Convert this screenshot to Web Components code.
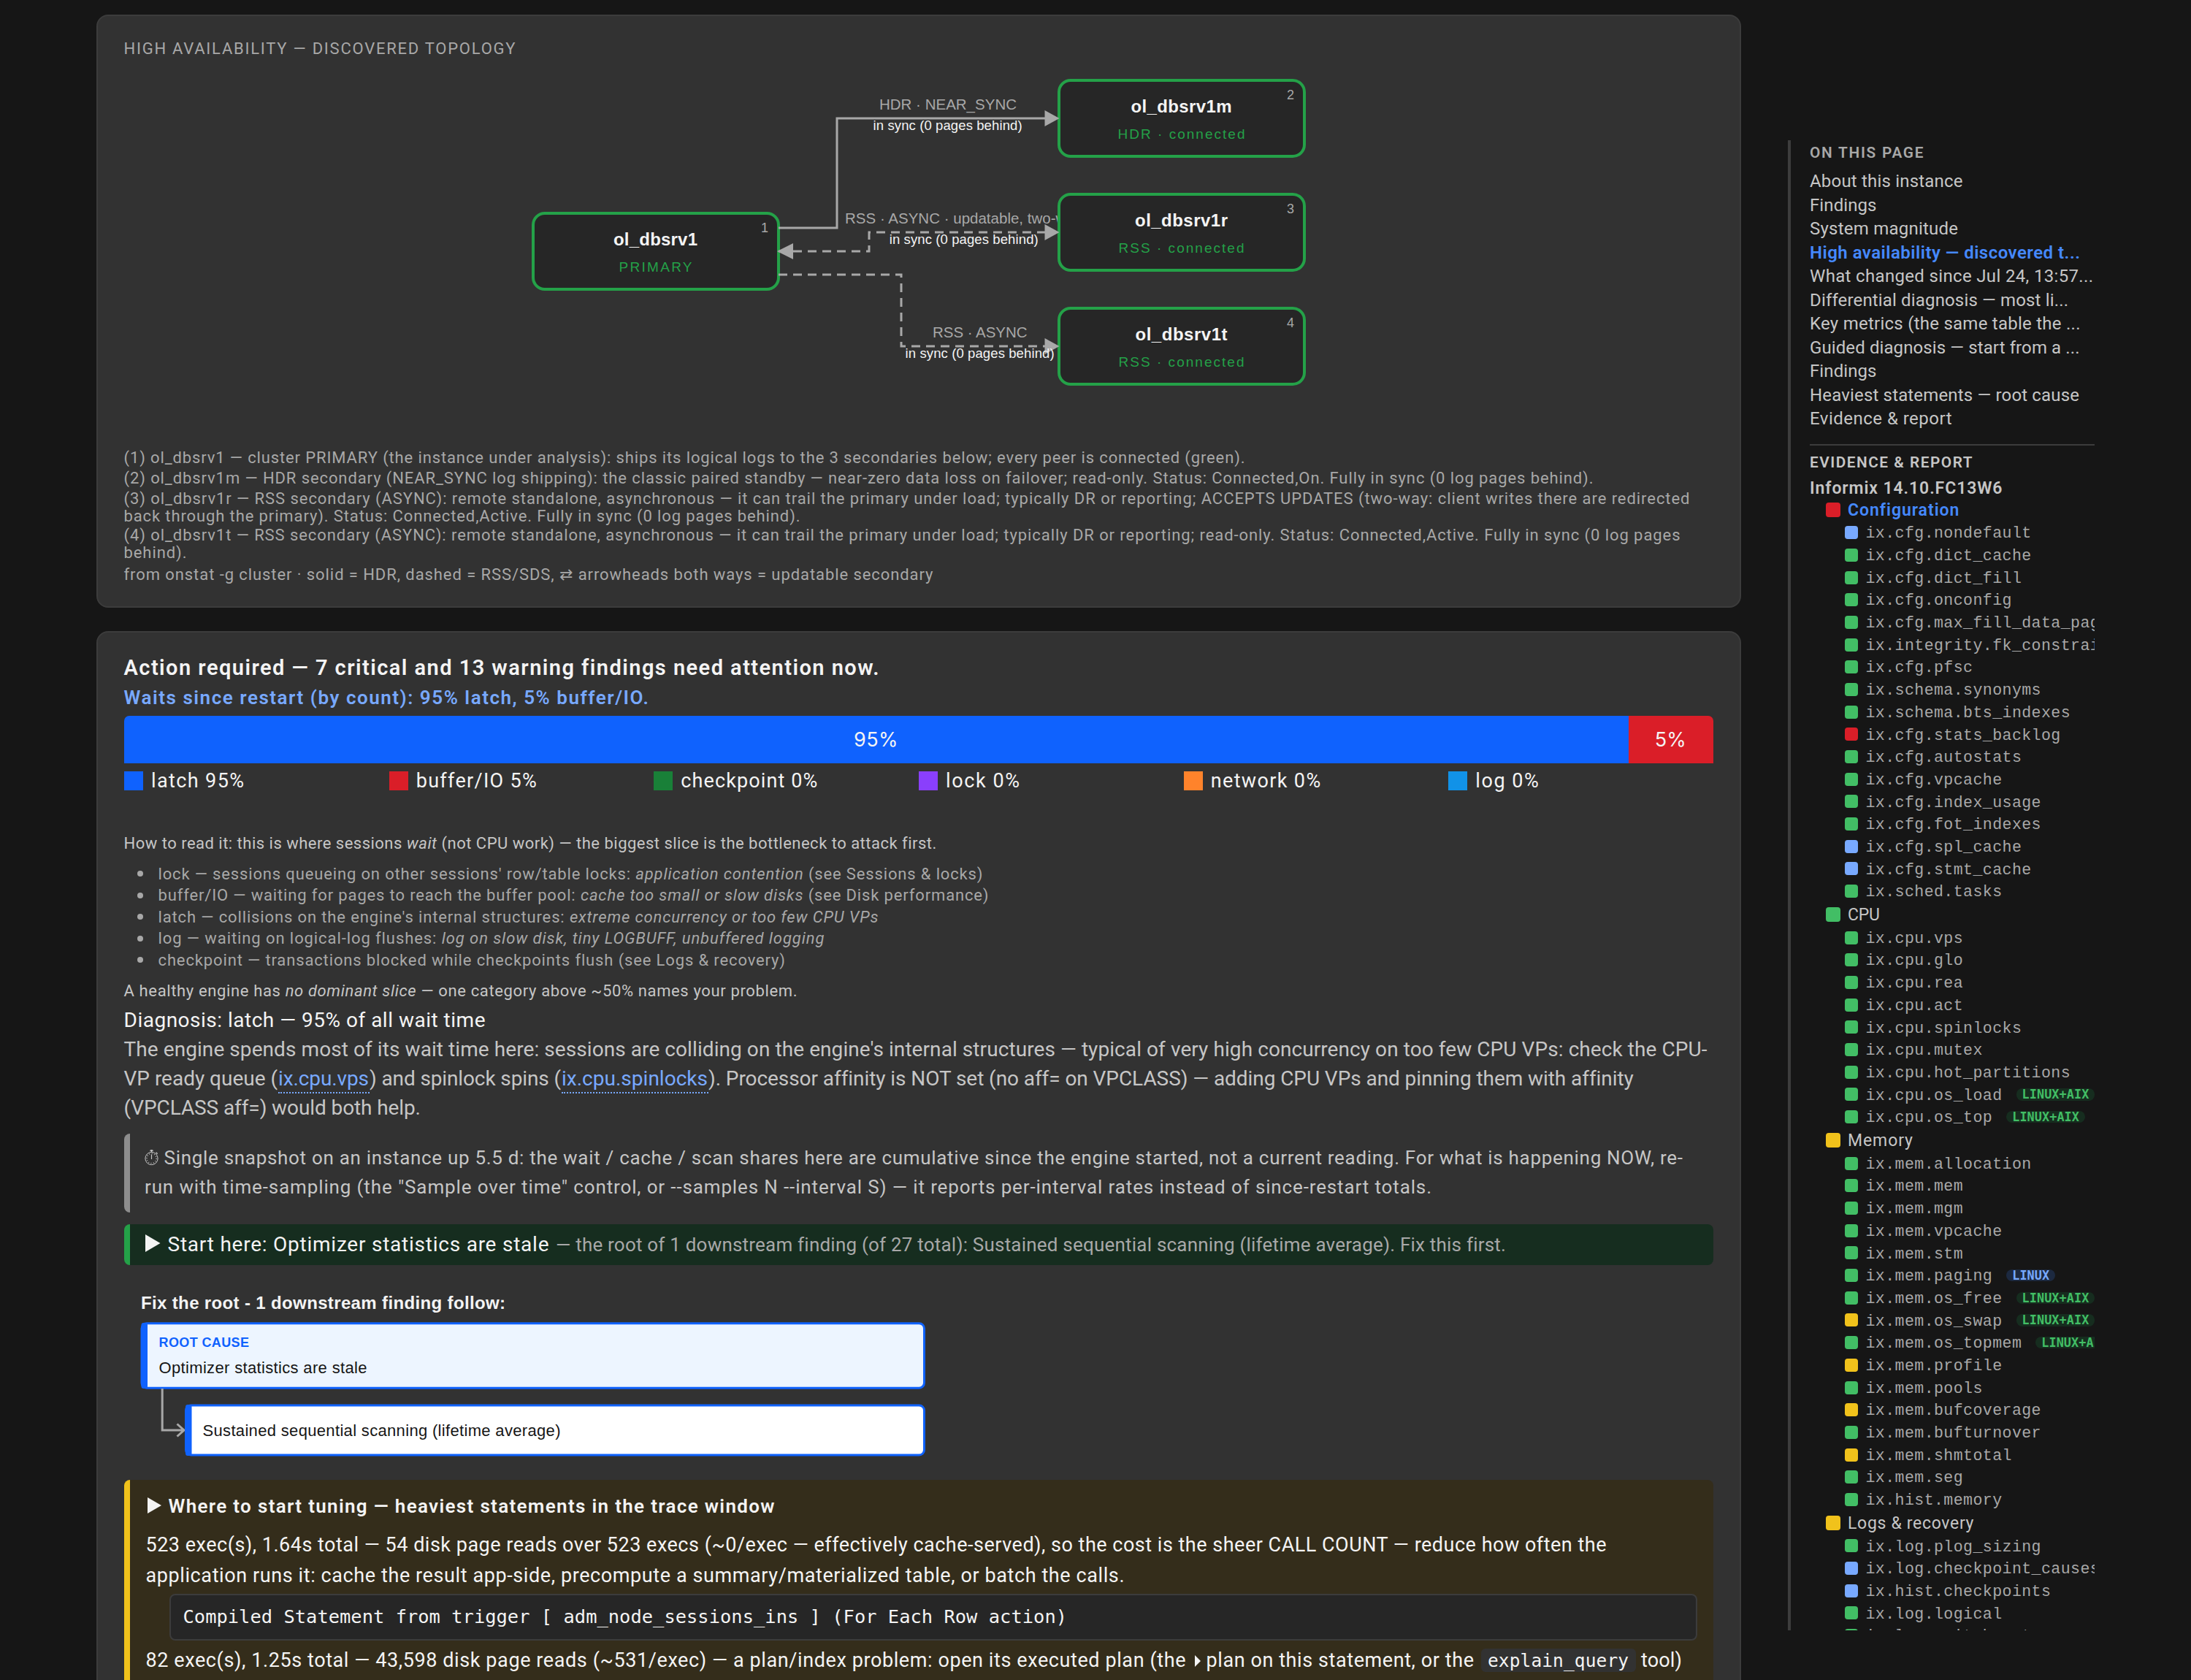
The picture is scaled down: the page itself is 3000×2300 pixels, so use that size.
<!DOCTYPE html>
<html lang="en">
<head>
<meta charset="utf-8">
<title>Informix health report</title>
<style>
html,body{margin:0;padding:0;background:#161616;}
body{width:3000px;height:2300px;overflow:hidden;color:#c6c6c6;font-family:Roboto,"Noto Sans","DejaVu Sans",sans-serif;}
em{font-style:italic;}
</style>
</head>
<body>
<report-page>
  <topology-card slot="main"></topology-card>
  <findings-card slot="main"></findings-card>
  <page-nav slot="nav"></page-nav>
</report-page>
<script>
/* <t-line w size lh>: one line of text whose tracking is tuned to a given width. */
class TLine extends HTMLElement {
  connectedCallback() {
    if (this.shadowRoot) return;
    const root = this.attachShadow({mode: 'open'});
    const size = this.getAttribute('size'), lh = this.getAttribute('lh');
    root.innerHTML = `<style>
      :host{display:block;white-space:pre;flex:none;width:max-content;
        ${size ? `font-size:${size}px;` : ''}${lh ? `line-height:${lh}px;height:${lh}px;` : ''}}
      </style><slot></slot>`;
    const w = parseFloat(this.getAttribute('w'));
    if (w) {
      this.style.letterSpacing = '0px';
      const natural = this.getBoundingClientRect().width;
      const ls = (w - 1 - natural) / Math.max(1, [...this.textContent].length - 1);
      this.style.letterSpacing = ls.toFixed(4) + 'px';
      this.style.width = w + 'px';
    }
  }
}

class ReportPage extends HTMLElement {
  constructor() {
    super();
    this.attachShadow({mode: 'open'}).innerHTML = `<style>
      :host{display:flex;width:3000px;height:2300px;overflow:hidden;align-items:flex-start;}
      main{display:flex;flex-direction:column;gap:32px;width:2252px;margin:20px 64px 0 132px;flex:none;}
      aside{flex:none;margin-top:192px;}
    </style><main><slot name="main"></slot></main><aside><slot name="nav"></slot></aside>`;
  }
}

const cardCss = `:host{display:block;box-sizing:border-box;background:#323232;border:2px solid #3c3c3c;border-radius:16px;padding:28px 36px 0 35.5px;}`;

class TopologyCard extends HTMLElement {
  connectedCallback() {
    const node = (x, y, n, name, nw, role, rw) => `
      <rect x="${x}" y="${y}" width="336" height="104" rx="16" fill="#262626" stroke="#24a148" stroke-width="4"/>
      <text x="${x + 167.5 - nw / 2}" y="${y + 44}" class="name" textLength="${nw}">${name}</text>
      <text x="${x + 167.5 - rw / 2}" y="${y + 80}" class="role" textLength="${rw}">${role}</text>
      <text x="${x + 322}" y="${y + 26}" class="num">${n}</text>`;
    const right = y => `<path d="M1430.5 ${y - 11}L1450.5 ${y}L1430.5 ${y + 11}Z" fill="#a8a8a8"/>`;
    const sync = (cx, y) => `<text x="${cx - 102}" y="${y}" class="sync" textLength="204">in sync (0 pages behind)</text>`;
    this.attachShadow({mode: 'open'}).innerHTML = `<style>${cardCss}
      :host{height:812px;}
      svg{display:block;margin:1px 0 0 .5px;}
      svg text{font-family:"Liberation Sans",Arial,sans-serif;}
      .name{font-size:24px;font-weight:700;fill:#f4f4f4;}
      .role{font-size:19px;fill:#24a148;}
      .num{font-size:18px;fill:#a8a8a8;text-anchor:end;}
      .lab{font-size:20.5px;fill:#a8a8a8;}
      .sync{font-size:18.5px;fill:#f4f4f4;}
      .edge{fill:none;stroke:#a8a8a8;stroke-width:3;}
      .dash{stroke-dasharray:12 8;}
      .title,.notes{color:#a8a8a8;}
      .notes{padding-top:.5px;display:flex;flex-direction:column;}
      .p{margin-bottom:4px;}
      .p3{margin-bottom:2px;}
      .p4{margin-bottom:6px;}
    </style>
    <t-line class="title" w="537" size="22" lh="33">HIGH AVAILABILITY — DISCOVERED TOPOLOGY</t-line>
    <svg width="2176" height="530" viewBox="170 84 2176 530">
      <text x="1204" y="150" class="lab" textLength="188">HDR · NEAR_SYNC</text>
      <text x="1157" y="306" class="lab" textLength="325">RSS · ASYNC · updatable, two-way</text>
      <text x="1277" y="462" class="lab" textLength="129.5">RSS · ASYNC</text>
      ${node(730, 292, 1, 'ol_dbsrv1', 115, 'PRIMARY', 100)}
      ${node(1450, 110, 2, 'ol_dbsrv1m', 138, 'HDR · connected', 174)}
      ${node(1450, 266, 3, 'ol_dbsrv1r', 127, 'RSS · connected', 172)}
      ${node(1450, 422, 4, 'ol_dbsrv1t', 126, 'RSS · connected', 172)}
      <path class="edge" d="M1066 312H1146V162H1440"/>
      <path class="edge dash" d="M1066 344H1190V318H1440"/>
      <path class="edge dash" d="M1066 376H1234V474H1440"/>
      <path d="M1086 333L1064 344L1086 355Z" fill="#a8a8a8"/>
      ${right(162)}${right(318)}${right(474)}
      ${sync(1297.6, 178)}${sync(1319.7, 334)}${sync(1341.6, 490)}
    </svg>
    <div class="notes">
      <div class="p"><t-line w="1536" size="22" lh="24">(1) ol_dbsrv1 — cluster PRIMARY (the instance under analysis): ships its logical logs to the 3 secondaries below; every peer is connected (green).</t-line></div>
      <div class="p"><t-line w="2013" size="22" lh="24">(2) ol_dbsrv1m — HDR secondary (NEAR_SYNC log shipping): the classic paired standby — near-zero data loss on failover; read-only. Status: Connected,On. Fully in sync (0 log pages behind).</t-line></div>
      <div class="p3"><t-line w="2145" size="22" lh="24">(3) ol_dbsrv1r — RSS secondary (ASYNC): remote standalone, asynchronous — it can trail the primary under load; typically DR or reporting; ACCEPTS UPDATES (two-way: client writes there are redirected</t-line>
      <t-line w="927" size="22" lh="24">back through the primary). Status: Connected,Active. Fully in sync (0 log pages behind).</t-line></div>
      <div class="p4"><t-line w="2132" size="22" lh="24">(4) ol_dbsrv1t — RSS secondary (ASYNC): remote standalone, asynchronous — it can trail the primary under load; typically DR or reporting; read-only. Status: Connected,Active. Fully in sync (0 log pages</t-line>
      <t-line w="87" size="22" lh="24">behind).</t-line></div>
      <div><t-line w="1109" size="22" lh="24">from onstat -g cluster · solid = HDR, dashed = RSS/SDS, ⇄ arrowheads both ways = updatable secondary</t-line></div>
    </div>`;
  }
}

class LegendItem extends HTMLElement {
  connectedCallback() {
    this.attachShadow({mode: 'open'}).innerHTML = `<style>
      :host{display:flex;flex:1 1 0;gap:11px;height:26px;color:#f4f4f4;}
      i{width:26px;height:26px;background:${this.getAttribute('color')};flex:none;}
    </style><i></i><t-line w="${this.getAttribute('w')}" size="27" lh="26">${this.getAttribute('label')}</t-line>`;
  }
}

class FindingsCard extends HTMLElement {
  connectedCallback() {
    this.attachShadow({mode: 'open'}).innerHTML = `<style>${cardCss}
      :host{height:1500px;overflow:hidden;}
      .b{font-weight:600;}
      .w{color:#f4f4f4;}
      .dim{color:#a8a8a8;}
      .bar{display:flex;height:65px;margin:5px 0 0 .5px;border-radius:7px 7px 0 0;overflow:hidden;color:#f4f4f4;font-family:Inter,Roboto,sans-serif;}
      .bar div{display:flex;align-items:center;justify-content:center;}
      .bar .l{flex:1;background:#0f62fe;}
      .bar .r{width:116.5px;background:#da1e28;}
      .legend{display:flex;margin:11px 0 0 .5px;}
      ul{margin:13px 0 13.5px;padding:0 0 0 18px;list-style:none;color:#a8a8a8;}
      li{display:flex;align-items:center;height:29.5px;gap:21px;}
      li::before{content:"";width:8px;height:8px;border-radius:50%;background:#a8a8a8;flex:none;}
      .row{display:flex;}
      .a{color:#78a9ff;display:block;height:38px;border-bottom:2px dotted #78a9ff;margin-bottom:-2px;}
      .snap{margin-top:15.5px;box-sizing:border-box;height:108px;border-left:8px solid #8d8d8d;border-radius:8px;padding:13px 0 0 20.5px;}
      .clock{flex:none;margin:8px 7.5px 0 0;display:block;}
      .start{display:flex;align-items:center;margin-top:16px;box-sizing:border-box;height:56px;border-left:8px solid #24a148;border-radius:8px;background:#162d1f;padding-left:21px;}
      .tri{flex:none;display:block;}
      svg text{font-family:"Liberation Sans",Arial,sans-serif;}
      .tune{box-sizing:border-box;height:400px;border-left:8px solid #f1c21b;border-radius:8px;background:#342d1b;padding:16px 22px 0 22px;color:#f4f4f4;}
      .code{margin:4px 0 6px 32px;box-sizing:border-box;height:64px;border:2px solid #3c3c3c;border-radius:8px;background:#262626;padding-left:17px;font-family:"DejaVu Sans Mono",monospace;}
      .last{display:flex;align-items:baseline;}
      .chip{background:#323232;border-radius:6px;padding:2.5px 9px 0;height:30px;font-family:"DejaVu Sans Mono",monospace;margin:0 7px 0 9px;}
      .small{display:block;margin:0 8px 0 11px;}
    </style>
    <t-line class="b w" w="1034.5" size="29" lh="40">Action required — 7 critical and 13 warning findings need attention now.</t-line>
    <t-line class="b" style="color:#78a9ff;margin-top:1px" w="719.5" size="26" lh="40">Waits since restart (by count): 95% latch, 5% buffer/IO.</t-line>
    <div class="bar"><div class="l"><t-line w="61.5" size="27" lh="66">95%</t-line></div><div class="r"><t-line w="44" size="27" lh="66">5%</t-line></div></div>
    <div class="legend">
      <legend-item color="#0f62fe" label="latch 95%" w="128"></legend-item>
      <legend-item color="#da1e28" label="buffer/IO 5%" w="166"></legend-item>
      <legend-item color="#198038" label="checkpoint 0%" w="188"></legend-item>
      <legend-item color="#8a3ffc" label="lock 0%" w="102"></legend-item>
      <legend-item color="#ff832b" label="network 0%" w="151.5"></legend-item>
      <legend-item color="#1192e8" label="log 0%" w="87.5"></legend-item>
    </div>
    <t-line style="margin-top:58.5px" w="1113" size="22" lh="28">How to read it: this is where sessions <em>wait</em> (not CPU work) — the biggest slice is the bottleneck to attack first.</t-line>
    <ul>
      <li><t-line w="1130" size="22" lh="29.5">lock — sessions queueing on other sessions' row/table locks: <em>application contention</em> (see Sessions &amp; locks)</t-line></li>
      <li><t-line w="1138" size="22" lh="29.5">buffer/IO — waiting for pages to reach the buffer pool: <em>cache too small or slow disks</em> (see Disk performance)</t-line></li>
      <li><t-line w="987" size="22" lh="29.5">latch — collisions on the engine's internal structures: <em>extreme concurrency or too few CPU VPs</em></t-line></li>
      <li><t-line w="912.5" size="22" lh="29.5">log — waiting on logical-log flushes: <em>log on slow disk, tiny LOGBUFF, unbuffered logging</em></t-line></li>
      <li><t-line w="859" size="22" lh="29.5">checkpoint — transactions blocked while checkpoints flush (see Logs &amp; recovery)</t-line></li>
    </ul>
    <t-line w="923" size="22" lh="28">A healthy engine has <em>no dominant slice</em> — one category above ~50% names your problem.</t-line>
    <t-line class="w" style="margin-top:6px" w="496" size="28" lh="40">Diagnosis: latch — 95% of all wait time</t-line>
    <t-line w="2169" size="28" lh="40">The engine spends most of its wait time here: sessions are colliding on the engine's internal structures — typical of very high concurrency on too few CPU VPs: check the CPU-</t-line>
    <div class="row"><t-line w="211.5" size="28" lh="40">VP ready queue (</t-line><span class="a"><t-line w="125" size="28" lh="40">ix.cpu.vps</t-line></span><t-line w="263" size="28" lh="40">) and spinlock spins (</t-line><span class="a"><t-line w="201" size="28" lh="40">ix.cpu.spinlocks</t-line></span><t-line w="1263" size="28" lh="40">). Processor affinity is NOT set (no aff= on VPCLASS) — adding CPU VPs and pinning them with affinity</t-line></div>
    <t-line w="407.5" size="28" lh="40">(VPCLASS aff=) would both help.</t-line>
    <div class="snap">
      <div class="row"><svg class="clock" width="19" height="23" viewBox="0 0 19 23" fill="none" stroke="#c6c6c6"><circle cx="9.5" cy="13" r="8.6" stroke-width="1"/><circle cx="9.5" cy="13" r="6.6" stroke-width="1.6" stroke-dasharray="0.9 2.556"/><path d="M9.5 14V7.5" stroke-width="1.2"/><path d="M7.5 2.6Q9.5 1 11.5 2.6M9.5 2v2.4M15.6 4.8l2 2" stroke-width="1.4"/></svg><t-line w="2080.5" size="26" lh="40">Single snapshot on an instance up 5.5 d: the wait / cache / scan shares here are cumulative since the engine started, not a current reading. For what is happening NOW, re-</t-line></div>
      <t-line w="1763" size="26" lh="40">run with time-sampling (the "Sample over time" control, or --samples N --interval S) — it reports per-interval rates instead of since-restart totals.</t-line>
    </div>
    <div class="start"><svg class="tri" width="31" height="24" viewBox="0 0 31 24" style="margin-bottom:4px"><path d="M0 0L20.5 12L0 24Z" fill="#f4f4f4"/></svg><t-line class="w" style="margin-right:8.5px" w="523" size="28" lh="56">Start here: Optimizer statistics are stale</t-line><t-line class="dim" w="1300" size="26" lh="58">— the root of 1 downstream finding (of 27 total): Sustained sequential scanning (lifetime average). Fix this first.</t-line></div>
    <svg width="1200" height="294" viewBox="170 1732 1200 294" style="display:block;margin-left:.5px">
      <text x="193" y="1792" font-size="24" font-weight="700" fill="#f4f4f4" textLength="499">Fix the root - 1 downstream finding follow:</text>
      <rect x="194" y="1811.7" width="1071.5" height="88.5" rx="7" fill="#edf5ff" stroke="#0f62fe" stroke-width="3"/>
      <rect x="193.5" y="1811" width="8.5" height="90" rx="3" fill="#0f62fe"/>
      <text x="217.5" y="1844" font-size="18" font-weight="700" fill="#0f62fe" textLength="123.5">ROOT CAUSE</text>
      <text x="217.5" y="1880" font-size="22" fill="#161616" textLength="285">Optimizer statistics are stale</text>
      <path d="M222.2 1901V1958H252M242.5 1949.5L252 1958L242.5 1966.5" fill="none" stroke="#a8a8a8" stroke-width="3"/>
      <rect x="254.5" y="1924" width="1011" height="68" rx="7" fill="#fff" stroke="#0f62fe" stroke-width="3"/>
      <rect x="254" y="1923" width="8.5" height="70" rx="3" fill="#0f62fe"/>
      <text x="277.5" y="1966" font-size="22" fill="#161616" textLength="490">Sustained sequential scanning (lifetime average)</text>
    </svg>
    <div class="tune">
      <div class="row" style="margin-left:2px"><svg class="tri" width="29" height="24" viewBox="0 0 29 24" style="margin-top:7px"><path d="M0 1L19 12L0 23Z" fill="#f4f4f4"/></svg><t-line class="b" w="831" size="26" lh="40">Where to start tuning — heaviest statements in the trace window</t-line></div>
      <t-line style="margin-top:12px" w="2001" size="27" lh="42">523 exec(s), 1.64s total — 54 disk page reads over 523 execs (~0/exec — effectively cache-served), so the cost is the sheer CALL COUNT — reduce how often the</t-line>
      <t-line w="1341" size="27" lh="42">application runs it: cache the result app-side, precompute a summary/materialized table, or batch the calls.</t-line>
      <div class="code"><t-line w="1211.5" size="25.4" lh="59">Compiled Statement from trigger [ adm_node_sessions_ins ] (For Each Row action)</t-line></div>
      <div class="last"><t-line w="1425" size="27" lh="42">82 exec(s), 1.25s total — 43,598 disk page reads (~531/exec) — a plan/index problem: open its executed plan (the</t-line><svg class="small" width="8" height="16" viewBox="0 0 8 16"><path d="M0 0L8 8L0 16Z" fill="#f4f4f4"/></svg><t-line w="367.5" size="27" lh="42">plan on this statement, or the</t-line><span class="chip"><t-line w="194" size="24.5" lh="30">explain_query</t-line></span><t-line w="57" size="27" lh="42">tool)</t-line></div>
    </div>`;
  }
}

const dot = {g: '#42be65', r: '#da1e28', b: '#78a9ff', y: '#f1c21b'};

class NavGroup extends HTMLElement {
  connectedCallback() {
    const on = this.hasAttribute('active');
    this.attachShadow({mode: 'open'}).innerHTML = `<style>
      :host{display:flex;align-items:center;gap:10px;height:32.8px;padding-left:22px;color:${on ? '#4589ff' : '#c6c6c6'};font-weight:${on ? 600 : 400};}
      i{width:20px;height:20px;margin-bottom:2px;border-radius:4px;flex:none;background:${dot[this.getAttribute('s')]};}
    </style><i></i><t-line w="${this.getAttribute('w')}" size="23" lh="32.8">${this.getAttribute('label').replace('&', '&amp;')}</t-line>`;
  }
}

class NavLeaf extends HTMLElement {
  connectedCallback() {
    const tag = this.getAttribute('tag');
    this.attachShadow({mode: 'open'}).innerHTML = `<style>
      :host{display:flex;align-items:center;height:30.7px;padding-left:48px;white-space:nowrap;color:#a8a8a8;}
      i{width:18px;height:18px;margin:0 10.5px 3px 0;border-radius:4px;flex:none;background:${dot[this.getAttribute('s')]};}
      code{font:21.6px/30.7px "Liberation Mono",monospace;letter-spacing:.4px;flex:none;}
      b{flex:none;margin:0 0 3px 19px;padding:0 8px;border-radius:8px;height:16.5px;font:700 16.8px/17px "DejaVu Sans Mono",monospace;letter-spacing:.1px;
        ${tag === 'LINUX' ? 'background:#1c2940;color:#78a9ff' : 'background:#162d1f;color:#42be65'}}
    </style><i></i><code>${this.getAttribute('label')}</code>${tag ? `<b>${tag}</b>` : ''}`;
  }
}

class PageNav extends HTMLElement {
  connectedCallback() {
    const items = [['About this instance', 210.5], ['Findings', 92.5], ['System magnitude', 204], ['High availability — discovered t...', 371, 1],
      ['What changed since Jul 24, 13:57...', 389], ['Differential diagnosis — most li...', 355], ['Key metrics (the same table the ...', 371.5],
      ['Guided diagnosis — start from a ...', 370.5], ['Findings', 92.5], ['Heaviest statements — root cause', 370], ['Evidence & report', 195.5]];
    const tree = [
      ['Configuration', 'r', 153, 'b:cfg.nondefault g:cfg.dict_cache g:cfg.dict_fill g:cfg.onconfig g:cfg.max_fill_data_pages g:integrity.fk_constraints g:cfg.pfsc g:schema.synonyms g:schema.bts_indexes r:cfg.stats_backlog g:cfg.autostats g:cfg.vpcache g:cfg.index_usage g:cfg.fot_indexes b:cfg.spl_cache b:cfg.stmt_cache g:sched.tasks'],
      ['CPU', 'g', 45, 'g:cpu.vps g:cpu.glo g:cpu.rea g:cpu.act g:cpu.spinlocks g:cpu.mutex g:cpu.hot_partitions g:cpu.os_load:LINUX+AIX g:cpu.os_top:LINUX+AIX'],
      ['Memory', 'y', 90, 'g:mem.allocation g:mem.mem g:mem.mgm g:mem.vpcache g:mem.stm g:mem.paging:LINUX g:mem.os_free:LINUX+AIX y:mem.os_swap:LINUX+AIX g:mem.os_topmem:LINUX+AIX y:mem.profile g:mem.pools y:mem.bufcoverage g:mem.bufturnover y:mem.shmtotal g:mem.seg g:hist.memory'],
      ['Logs & recovery', 'y', 173.5, 'g:log.plog_sizing b:log.checkpoint_causes b:hist.checkpoints g:log.logical g:log.switch_rate']];
    this.attachShadow({mode: 'open'}).innerHTML = `<style>
      :host{display:block;box-sizing:border-box;width:420px;height:2040px;overflow:hidden;border-left:4px solid #3d3d3d;padding:2px 0 0 26px;color:#c6c6c6;}
      .h{font-weight:600;}
      .list{margin-top:8px;}
      .on{color:#4589ff;font-weight:600;}
      hr{border:0;height:2px;background:#3c3c3c;margin:18px 0 7.5px;}
    </style>
    <t-line class="h" style="color:#a8a8a8" w="156.5" size="20.8" lh="30">ON THIS PAGE</t-line>
    <div class="list">${items.map(([t, w, on]) => `<t-line class="${on ? 'on' : ''}" w="${w}" size="24" lh="32.55">${t.replace('&', '&amp;')}</t-line>`).join('')}</div>
    <hr>
    <t-line class="h" w="223.5" size="20.8" lh="30">EVIDENCE &amp; REPORT</t-line>
    <t-line class="h" style="margin-top:7px" w="264.5" size="23" lh="28">Informix 14.10.FC13W6</t-line>
    ${tree.map(([t, s, w, leaves], i) => `<nav-group label="${t.replace('&', '&amp;')}" s="${s}" w="${w}" ${i ? '' : 'active'}></nav-group>` +
      leaves.split(' ').map(l => { const [c, n, tag] = l.split(':'); return `<nav-leaf s="${c}" label="ix.${n}" ${tag ? `tag="${tag}"` : ''}></nav-leaf>`; }).join('')).join('')}`;
  }
}

customElements.define('report-page', ReportPage);
customElements.define('t-line', TLine);
customElements.define('legend-item', LegendItem);
customElements.define('nav-group', NavGroup);
customElements.define('nav-leaf', NavLeaf);
customElements.define('topology-card', TopologyCard);
customElements.define('findings-card', FindingsCard);
customElements.define('page-nav', PageNav);
</script>
</body>
</html>
